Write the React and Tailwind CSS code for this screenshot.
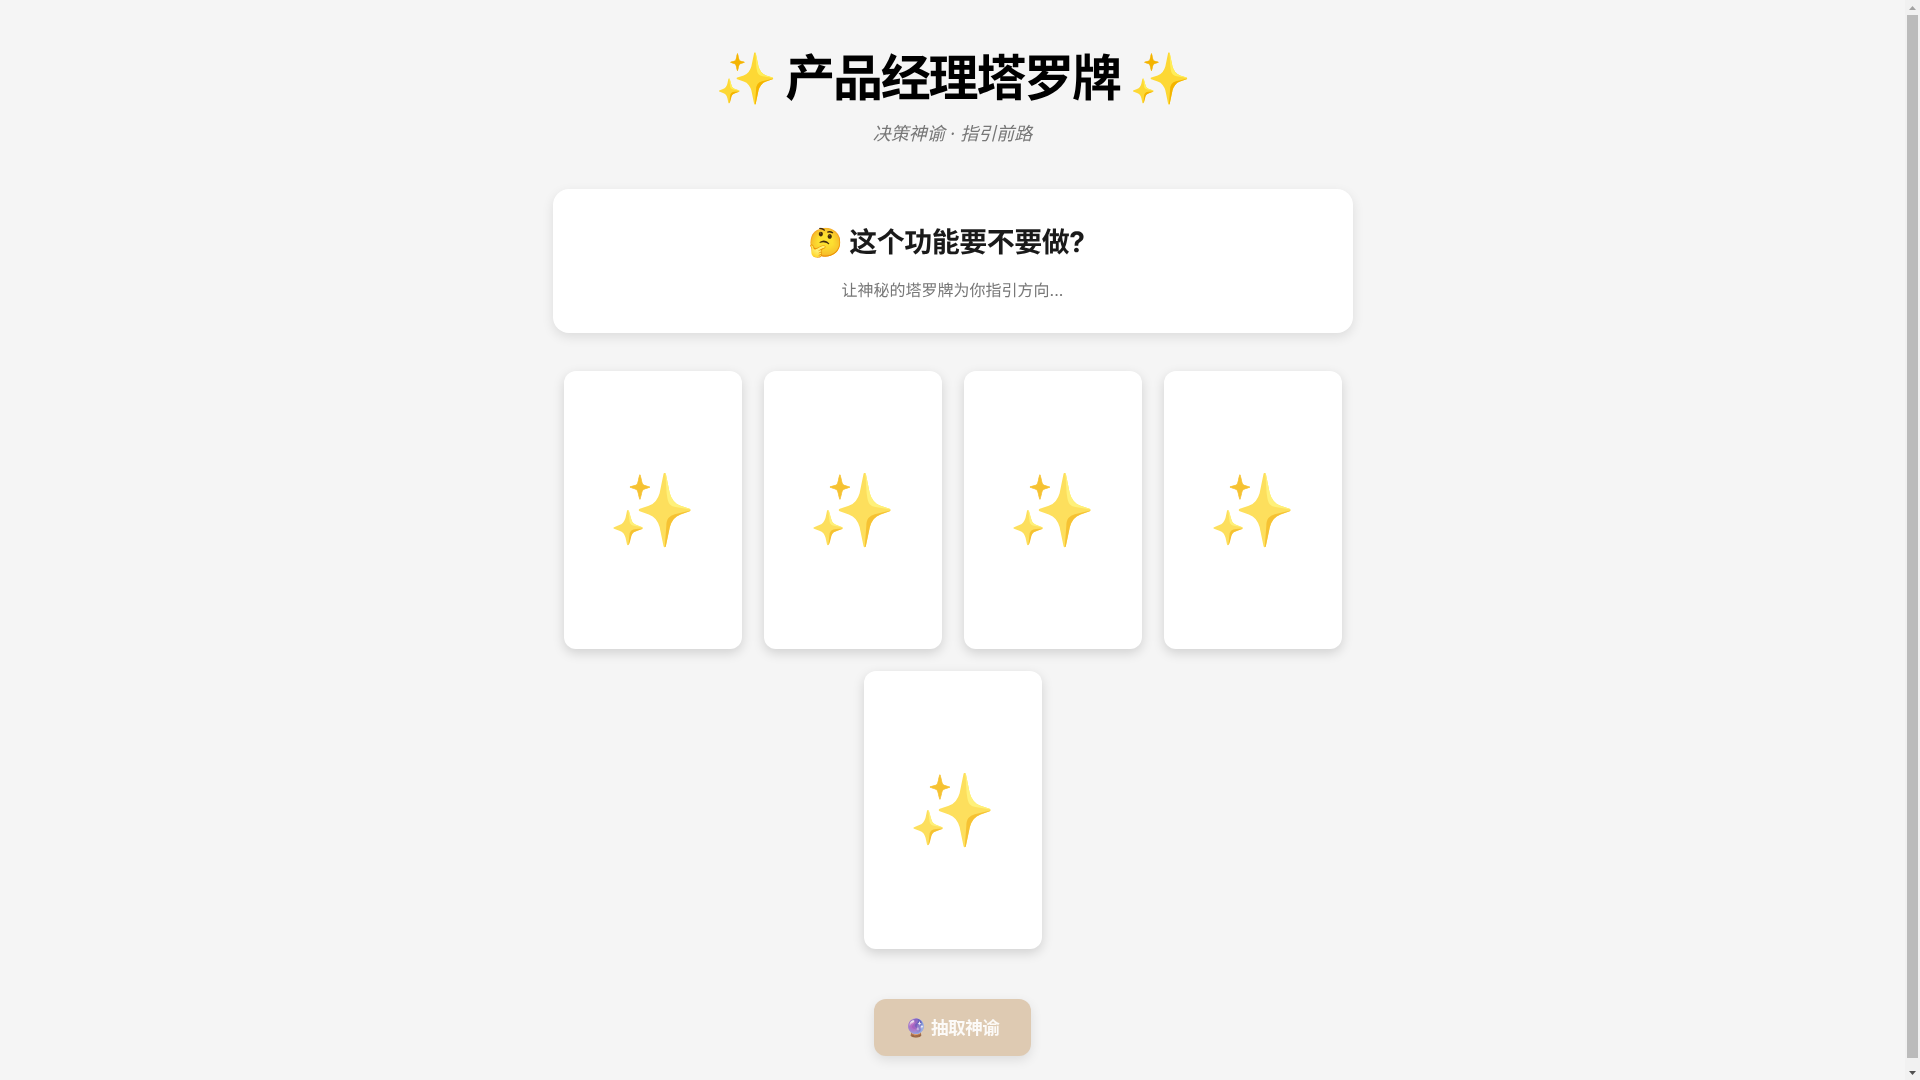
const FONT = "font-['Inter','Noto_Sans_CJK_SC','Noto_Color_Emoji',sans-serif] [text-rendering:geometricPrecision]";

function Card() {
  return (
    <div className="w-[178px] h-[278px] bg-white rounded-xl shadow-[0_4px_12px_rgba(0,0,0,0.15)] flex items-center justify-center">
      <span className="text-[71px] opacity-80">✨</span>
    </div>
  );
}

function Scrollbar() {
  return (
    <div className="w-[15px] shrink-0 h-screen bg-[#f1f1f1] flex flex-col">
      <div className="h-[15px] flex items-center justify-center">
        <svg width="7" height="4" viewBox="0 0 7 4" className="fill-[#a3a3a3]"><path d="M3.5 0 L7 4 L0 4 Z" /></svg>
      </div>
      <div className="flex-1 px-[2px]">
        <div className="h-[1043px] w-[11px] bg-[#bbbbbb]" />
      </div>
      <div className="h-[15px] flex items-center justify-center">
        <svg width="7" height="4" viewBox="0 0 7 4" className="fill-[#505050]"><path d="M0 0 L7 0 L3.5 4 Z" /></svg>
      </div>
    </div>
  );
}

export default function App() {
  return (
    <div className={`h-screen overflow-hidden flex bg-[#f5f5f5] ${FONT}`}>
      <div className="flex-1 min-w-0 pt-10 pb-[31px]">
        <div className="w-[800px] mx-auto">
          <div className="text-center mb-10">
            <h1 className="pt-[1px] text-[50px] leading-[76px] font-bold text-black tracking-[-2.2px] blur-[0.3px]">✨ 产品经理塔罗牌 ✨</h1>
            <p className="text-lg italic text-[#777777] mt-[4px] blur-[0.3px]">决策神谕 · 指引前路</p>
          </div>
          <div className="bg-white rounded-2xl shadow-[0_4px_12px_rgba(0,0,0,0.1)] pt-8 pb-[31px] px-8 text-center mb-[38px]">
            <h2 className="pr-3 text-[28px] leading-[42px] font-bold text-[#1a1a1a] tracking-[-0.5px] mb-[15px] blur-[0.3px]">🤔 这个功能要不要做?</h2>
            <p className="text-base text-[#777777] blur-[0.3px]">让神秘的塔罗牌为你指引方向...</p>
          </div>
          <div className="flex flex-wrap justify-center gap-[22px] mb-[50px]">
            <Card />
            <Card />
            <Card />
            <Card />
            <Card />
          </div>
          <div className="flex justify-center">
            <button className="h-[57px] pt-[2px] px-8 rounded-xl bg-[#decab2] text-white/90 text-[17.6px] font-semibold tracking-[-0.5px] shadow-[0_4px_12px_rgba(0,0,0,0.1)]">
              <span className="blur-[0.3px] inline-block">🔮 抽取神谕</span>
            </button>
          </div>
        </div>
      </div>
      <Scrollbar />
    </div>
  );
}
